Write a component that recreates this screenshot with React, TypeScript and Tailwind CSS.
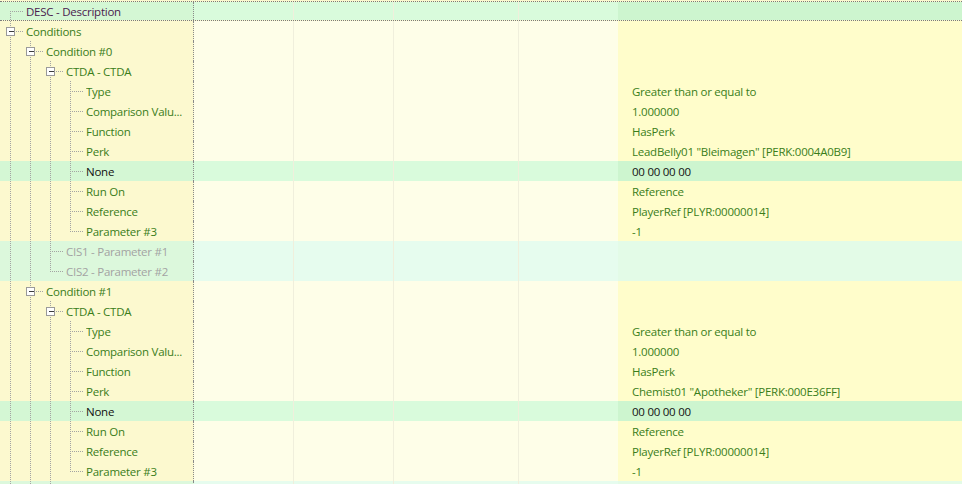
import React from "react";

type Kind = "normal" | "green" | "cis" | "desc";
type Row = {
  level: number;
  text: string;
  box?: boolean;
  last?: boolean;
  first?: boolean;
  value?: string;
  kind?: Kind;
  dark?: boolean;
};

const rows: Row[] = [
  { level: 0, text: "DESC - Description", kind: "desc", first: true },
  { level: 0, text: "Conditions", box: true },
  { level: 1, text: "Condition #0", box: true },
  { level: 2, text: "CTDA - CTDA", box: true },
  { level: 3, text: "Type", value: "Greater than or equal to" },
  { level: 3, text: "Comparison Valu...", value: "1.000000" },
  { level: 3, text: "Function", value: "HasPerk" },
  { level: 3, text: "Perk", value: 'LeadBelly01 "Bleimagen" [PERK:0004A0B9]' },
  { level: 3, text: "None", value: "00 00 00 00", kind: "green", dark: true },
  { level: 3, text: "Run On", value: "Reference" },
  { level: 3, text: "Reference", value: "PlayerRef [PLYR:00000014]" },
  { level: 3, text: "Parameter #3", value: "-1", last: true },
  { level: 2, text: "CIS1 - Parameter #1", kind: "cis" },
  { level: 2, text: "CIS2 - Parameter #2", kind: "cis", last: true },
  { level: 1, text: "Condition #1", box: true },
  { level: 2, text: "CTDA - CTDA", box: true },
  { level: 3, text: "Type", value: "Greater than or equal to" },
  { level: 3, text: "Comparison Valu...", value: "1.000000" },
  { level: 3, text: "Function", value: "HasPerk" },
  { level: 3, text: "Perk", value: 'Chemist01 "Apotheker" [PERK:000E36FF]' },
  { level: 3, text: "None", value: "00 00 00 00", kind: "green", dark: true },
  { level: 3, text: "Run On", value: "Reference" },
  { level: 3, text: "Reference", value: "PlayerRef [PLYR:00000014]" },
  { level: 3, text: "Parameter #3", value: "-1", last: true },
  { level: 2, text: "", kind: "cis" },
];

function TreeLines({ r }: { r: Row }) {
  const els: React.ReactNode[] = [];
  for (let k = 0; k < r.level; k++) {
    const x = 10 + 20 * k + 0.5;
    els.push(<line key={"g" + k} x1={x} y1={0} x2={x} y2={20} />);
  }
  const cx = 10 + 20 * r.level + 0.5;
  els.push(
    <line key="own" x1={cx} y1={r.first ? 10 : 0} x2={cx} y2={r.last ? 11 : 20} />
  );
  els.push(
    <line key="h" x1={r.box ? cx + 5 : cx + 1} y1={10.5} x2={20 * r.level + 24} y2={10.5} />
  );
  return (
    <svg width="193" height="20" className="absolute left-0 top-0" shapeRendering="crispEdges">
      <g stroke="#a3a3a3" strokeWidth="1" strokeDasharray="1 1">
        {els}
      </g>
      {r.box && (
        <g>
          <rect x={cx - 4} y={6.5} width={8} height={8} fill="#ffffff" stroke="#9a9a9a" />
          <line x1={cx - 2} y1={10.5} x2={cx + 3} y2={10.5} stroke="#3c3c3c" />
        </g>
      )}
    </svg>
  );
}

function bg(kind: Kind | undefined) {
  if (kind === "green" || kind === "desc")
    return { label: "bg-[#d4f7d4]", mid: "bg-[#d9fbdc]", val: "bg-[#cdf5cf]" };
  if (kind === "cis")
    return { label: "bg-[#dcf8dc]", mid: "bg-[#e6fcee]", val: "bg-[#e3fbe7]" };
  return { label: "bg-[#fcf9cf]", mid: "bg-[#fefee8]", val: "bg-[#fffdcb]" };
}

function RowView({ r }: { r: Row }) {
  const b = bg(r.kind);
  const textColor =
    r.kind === "desc"
      ? "text-[#4a1a4f]"
      : r.kind === "cis"
      ? "text-[#a3a3a3]"
      : r.dark
      ? "text-[#111111]"
      : "text-[#3a7d1a]";
  const valColor = r.dark ? "text-[#111111]" : "text-[#3a7d1a]";
  const focus = r.kind === "desc";
  return (
    <div
      className={
        "relative flex h-[20px] box-border " +
        (focus ? "border-y border-dotted border-[#7a7a7a]" : "")
      }
    >
      <div className={"relative w-[194px] shrink-0 border-r border-dotted border-[#8a8a8a] " + b.label}>
        <div className={focus ? "absolute left-0 top-[-1px]" : "absolute left-0 top-0"}>
          <TreeLines r={r} />
        </div>
        <div
          className={
            "absolute h-[20px] leading-[20px] whitespace-nowrap overflow-hidden " +
            (focus ? "top-0 " : "top-[1px] ") +
            textColor
          }
          style={{ left: 26 + 20 * r.level, right: 0 }}
        >
          {r.text}
        </div>
      </div>
      <div className={"w-[100px] shrink-0 border-r border-[#f0efdc] " + b.mid} />
      <div className={"w-[100px] shrink-0 border-r border-[#f0efdc] " + b.mid} />
      <div className={"w-[125px] shrink-0 border-r border-[#f0efdc] " + b.mid} />
      <div className={"w-[99px] shrink-0 " + b.mid} />
      <div
        className={
          "flex-1 pl-[14px] whitespace-nowrap " +
          (focus ? "leading-[18px] " : "leading-[20px] pt-[1px] ") +
          valColor +
          " " +
          b.val
        }
      >
        {r.value ?? ""}
      </div>
    </div>
  );
}

export default function App() {
  return (
    <div
      className="w-[962px] h-[484px] overflow-hidden bg-[#fcf9cf] pt-[1px] text-[11.5px] tracking-[-0.25px]"
      style={{ fontFamily: '"Open Sans", "Noto Sans", sans-serif' }}
    >
      {rows.map((r, i) => (
        <RowView key={i} r={r} />
      ))}
    </div>
  );
}
